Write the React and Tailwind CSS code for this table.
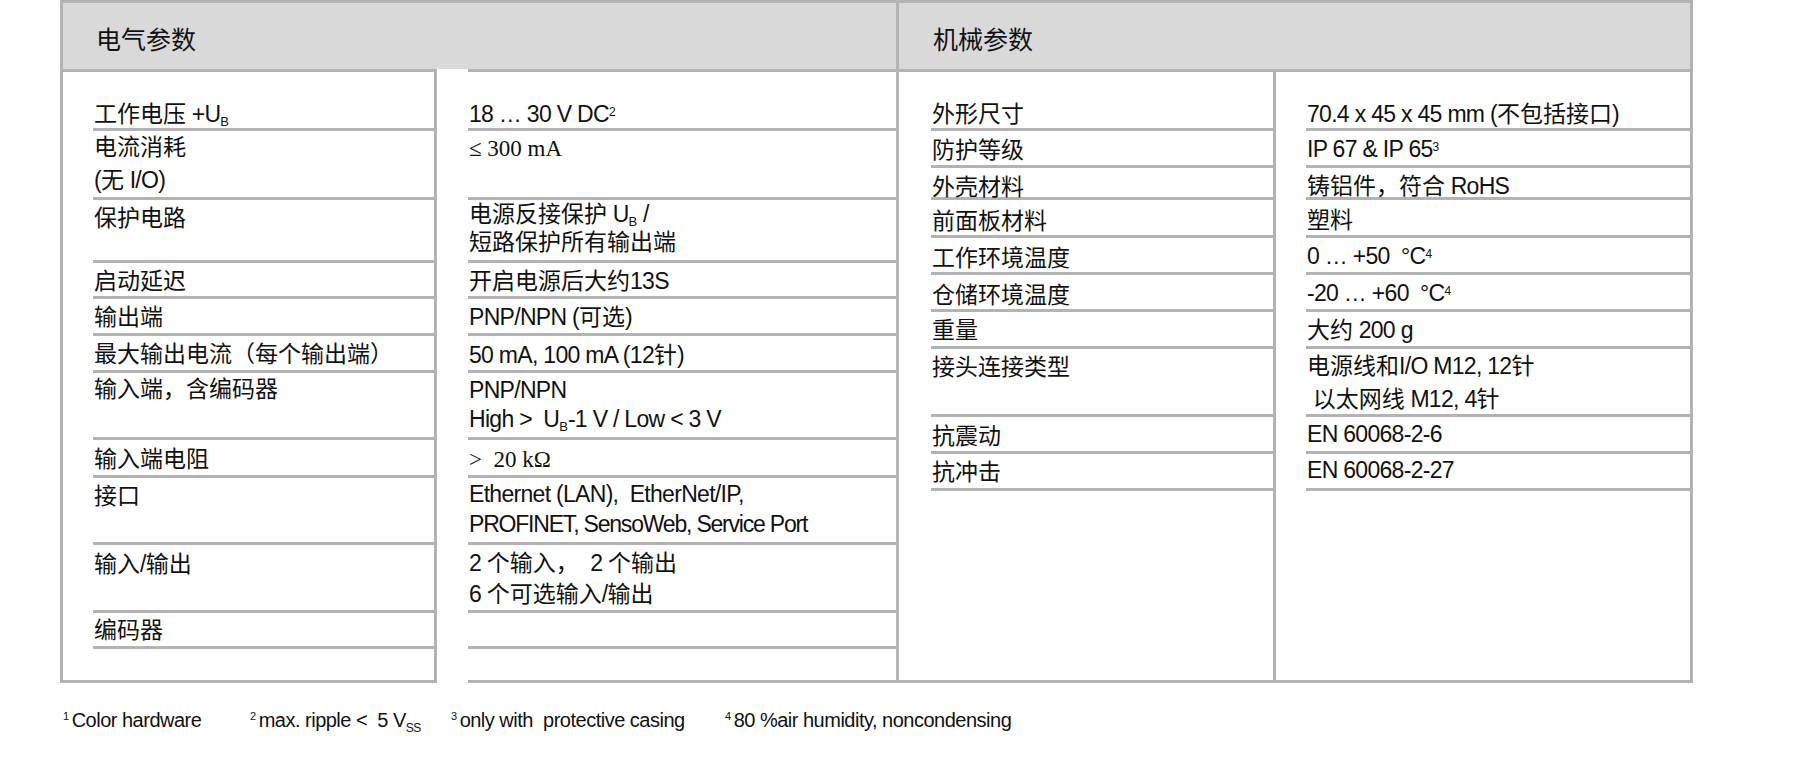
import React from 'react';

const line = 'border-[#b3b3b3]';
const CJK = /([\u2e80-\u9fff\u3000-\u303f\uff00-\uffef]+)/;

// latin runs are set a bit narrower than the CJK ones
const Tx = ({ children, tight }) =>
  String(children).split(CJK).map((part, i) =>
    i % 2 ? (
      <span key={i}>{part}</span>
    ) : part ? (
      <span key={i} className={tight ? 'tracking-[-1.2px]' : 'tracking-[-0.7px]'}>{part}</span>
    ) : null
  );

const Sub = ({ children }) => <span className="relative top-[4px] text-[13px] leading-none">{children}</span>;
const Sup = ({ children }) => <span className="relative -top-[6px] text-[12px] leading-none">{children}</span>;
const Serif = ({ children }) => <span className="font-['Liberation_Serif',serif]">{children}</span>;

const c = (content, pt = 'pt-[3px]', lh = 'leading-[30px]') => ({ content, pt, lh });

const electrical = [
  { h: 'h-[59px]', l: c(<><Tx>工作电压 +U</Tx><Sub>B</Sub></>, 'pt-[27px]'), v: c(<><Tx>18 … 30 V DC</Tx><Sup>2</Sup></>, 'pt-[27px]') },
  { h: 'h-[69px]', l: c(<>电流消耗<br /><Tx>(无 I/O)</Tx></>, 'pt-0', 'leading-[33px]'), v: c(<Serif>≤ 300 mA</Serif>, 'pt-[2px]') },
  { h: 'h-[63px]', l: c('保护电路'), v: c(<><Tx>电源反接保护 U</Tx><Sub>B</Sub><Tx> /</Tx><br />短路保护所有输出端</>, 'pt-0', 'leading-[28px]') },
  { h: 'h-[36px]', l: c('启动延迟'), v: c(<Tx>开启电源后大约13S</Tx>) },
  { h: 'h-[37px]', l: c('输出端'), v: c(<Tx>PNP/NPN (可选)</Tx>) },
  { h: 'h-[37px]', l: c('最大输出电流（每个输出端）'), v: c(<Tx>50 mA, 100 mA (12针)</Tx>, 'pt-[4px]') },
  { h: 'h-[67px]', l: c('输入端，含编码器', 'pt-[1px]'), v: c(<><Tx>PNP/NPN</Tx><br /><Tx>{'High >\u00a0 U'}</Tx><Sub>B</Sub><Tx>-1 V / Low &lt; 3 V</Tx></>, 'pt-[3px]', 'leading-[29px]') },
  { h: 'h-[38px]', l: c('输入端电阻', 'pt-[4px]'), v: c(<Serif>{'>\u00a0 20 kΩ'}</Serif>, 'pt-[4px]') },
  { h: 'h-[67px]', l: c('接口'), v: c(<><Tx>{'Ethernet (LAN),\u00a0 EtherNet/IP,'}</Tx><br /><Tx tight>PROFINET, SensoWeb, Service Port</Tx></>, 'pt-[1px]') },
  { h: 'h-[68px]', l: c(<Tx>输入/输出</Tx>, 'pt-[4px]'), v: c(<><Tx>{'2 个输入，\u00a0 2 个输出'}</Tx><br /><Tx>6 个可选输入/输出</Tx></>, 'pt-[3px]', 'leading-[31px]') },
  { h: 'h-[36px]', l: c('编码器', 'pt-[2px]'), v: c('') },
  { h: 'h-[31px]', l: c(''), v: c('') },
];

const mechanical = [
  { h: 'h-[59px]', l: c('外形尺寸', 'pt-[27px]'), v: c(<Tx>70.4 x 45 x 45 mm (不包括接口)</Tx>, 'pt-[27px]') },
  { h: 'h-[37px]', l: c('防护等级', 'pt-[4px]'), v: c(<><Tx>IP 67 &amp; IP 65</Tx><Sup>3</Sup></>) },
  { h: 'h-[32px]', l: c('外壳材料', 'pt-[4px]'), v: c(<Tx>铸铝件，符合 RoHS</Tx>) },
  { h: 'h-[38px]', l: c('前面板材料', 'pt-[6px]'), v: c('塑料', 'pt-[5px]') },
  { h: 'h-[37px]', l: c('工作环境温度', 'pt-[5px]'), v: c(<><Tx>{'0 … +50\u00a0 °C'}</Tx><Sup>4</Sup></>) },
  { h: 'h-[37px]', l: c('仓储环境温度', 'pt-[5px]'), v: c(<><Tx>{'-20 … +60\u00a0 °C'}</Tx><Sup>4</Sup></>) },
  { h: 'h-[37px]', l: c('重量'), v: c(<Tx>大约 200 g</Tx>) },
  { h: 'h-[68px]', l: c('接头连接类型'), v: c(<><Tx>电源线和I/O M12, 12针</Tx><br /><Tx>{'\u00a0以太网线 M12, 4针'}</Tx></>, 'pt-[1px]', 'leading-[33px]') },
  { h: 'h-[37px]', l: c('抗震动', 'pt-[4px]'), v: c(<Tx>EN 60068-2-6</Tx>, 'pt-[2px]') },
  { h: 'h-[37px]', l: c('抗冲击'), v: c(<Tx>EN 60068-2-27</Tx>, 'pt-[1px]') },
  { h: 'h-[189px]', l: c(''), v: c('') },
];

const Cells = ({ rows, side }) =>
  rows.map((r, i) => (
    <div
      key={i}
      className={`${r.h} ${r[side].pt} ${r[side].lh} pl-[1px] whitespace-nowrap ${i < rows.length - 1 ? `border-b-[3px] ${line}` : ''}`}
    >
      {r[side].content}
    </div>
  ));

const Note = ({ n, className, children }) => (
  <div className={`shrink-0 ${className || ''}`}>
    <span className="relative -top-[7px] mr-[3px] text-[11px] leading-none">{n}</span>
    {children}
  </div>
);

export default function App() {
  return (
    <div className="min-h-[760px] bg-white pl-[60px] text-[23px] text-[#111] font-['Liberation_Sans','Noto_Sans_CJK_SC',sans-serif]">
      {/* header */}
      <div className="flex">
        <div className={`h-[69px] w-[839px] border-t-[3px] border-x-[3px] ${line} bg-[#d9d9d9] pl-[33px] pt-[22px] text-[25px] leading-[30px]`}>
          电气参数
        </div>
        <div className={`h-[69px] w-[794px] border-t-[3px] border-r-[3px] ${line} bg-[#d9d9d9] pl-[34px] pt-[22px] text-[25px] leading-[30px]`}>
          机械参数
        </div>
      </div>

      {/* body */}
      <div className="flex">
        <div className={`w-[377px] border-[3px] ${line}`}>
          <div className="ml-[30px]">
            <Cells rows={electrical} side="l" />
          </div>
        </div>
        <div className="w-[31px]" />
        <div className={`w-[431px] border-y-[3px] border-r-[3px] ${line}`}>
          <Cells rows={electrical} side="v" />
        </div>
        <div className={`w-[377px] border-y-[3px] border-r-[3px] ${line}`}>
          <div className="ml-[32px]">
            <Cells rows={mechanical} side="l" />
          </div>
        </div>
        <div className={`w-[417px] border-y-[3px] border-r-[3px] ${line}`}>
          <div className="ml-[30px]">
            <Cells rows={mechanical} side="v" />
          </div>
        </div>
      </div>

      {/* footnotes */}
      <div className="mt-[25px] flex pl-[3px] text-[20px] leading-[24px] tracking-[-0.5px] whitespace-nowrap">
        <Note n="1" className="w-[187px]">Color hardware</Note>
        <Note n="2" className="w-[201px]">
          {'max. ripple <\u00a0 5 V'}
          <span className="relative top-[5px] text-[12px] leading-none">SS</span>
        </Note>
        <Note n="3" className="w-[274px]">{'only with\u00a0 protective casing'}</Note>
        <Note n="4">80 %air humidity, noncondensing</Note>
      </div>
    </div>
  );
}
